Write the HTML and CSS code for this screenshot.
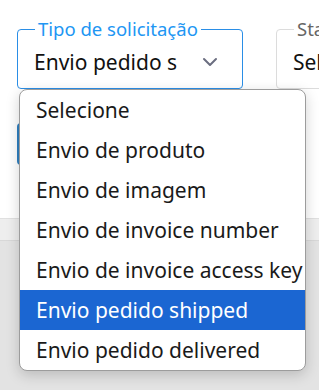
FILE: index.html
```html
<!DOCTYPE html>
<html lang="pt-BR">
<head>
  <meta charset="UTF-8">
  <title>Solicitações</title>
  <link rel="stylesheet" href="styles.css">
</head>
<body>

  <div class="page">
    <div class="filters">
      <fieldset class="field field-active">
        <legend>Tipo de solicitação</legend>
        <div class="field-value">
          <span>Envio pedido s</span>
          <svg class="chevron" width="16" height="10" viewBox="0 0 16 10">
            <path d="M2 2 L8 8 L14 2" stroke="#6b6e80" stroke-width="2" fill="none" stroke-linecap="round" stroke-linejoin="round"/>
          </svg>
        </div>
      </fieldset>
      <fieldset class="field">
        <legend>Status</legend>
        <div class="field-value"><span>Selecione</span></div>
      </fieldset>

      <ul class="dropdown">
        <li>Selecione</li>
        <li>Envio de produto</li>
        <li>Envio de imagem</li>
        <li>Envio de invoice number</li>
        <li>Envio de invoice access key</li>
        <li class="selected">Envio pedido shipped</li>
        <li>Envio pedido delivered</li>
      </ul>
    </div>

    <div class="actions">
      <button class="btn">Buscar</button>
    </div>

    <div class="table-head"></div>
    <div class="table-body"></div>
  </div>

</body>
</html>
```

FILE: styles.css
```css
body {
  margin: 0;
  font-family: "Noto Sans", sans-serif;
  background: #ffffff;
  overflow: hidden;
}

.page {
  height: 390px;
  display: flex;
  flex-direction: column;
}

.filters {
  position: relative;
  display: flex;
  gap: 33px;
  padding: 18px 0 0 17px;
}

.field {
  flex: none;
  width: 226px;
  height: 71px;
  margin: 0;
  padding: 0 16px;
  box-sizing: border-box;
  border: 1px solid #dcdcdc;
  border-radius: 4px;
}

.field legend {
  padding: 0 3px;
  margin-left: 1px;
  font-size: 18.5px;
  line-height: 22px;
  color: #666666;
}

.field-active {
  border-color: #2a8ee6;
}

.field-active legend {
  color: #2196f3;
}

.field-value {
  display: flex;
  align-items: center;
  justify-content: space-between;
  font-size: 21px;
  color: #111111;
  height: 44px;
  white-space: nowrap;
}

.chevron {
  flex: none;
  margin-right: 8px;
}

.dropdown {
  position: absolute;
  left: 19px;
  top: 89px;
  width: 285px;
  margin: 0;
  padding: 0;
  list-style: none;
  background: #ffffff;
  border: 1px solid #9c9c9c;
  border-radius: 8px;
  overflow: hidden;
  box-shadow: 0 4px 14px rgba(0, 0, 0, 0.18);
  z-index: 2;
}

.dropdown li {
  height: 40px;
  line-height: 40px;
  padding-left: 16px;
  font-size: 21px;
  color: #1a1a1a;
  white-space: nowrap;
}

.dropdown li.selected {
  background: #1b66d2;
  color: #ffffff;
}

.actions {
  padding: 34px 0 0 17px;
}

.btn {
  display: block;
  width: 120px;
  height: 42px;
  border: none;
  border-radius: 4px;
  background: #2f80c0;
  color: #ffffff;
  font-family: inherit;
  font-size: 16px;
}

.table-head {
  margin-top: 53px;
  height: 21px;
  background: #eeeeee;
  border-top: 1px solid #e0e0e0;
  border-bottom: 1px solid #d8d8d8;
}

.table-body {
  flex: 1;
  background: #e3e3e3;
}
```
